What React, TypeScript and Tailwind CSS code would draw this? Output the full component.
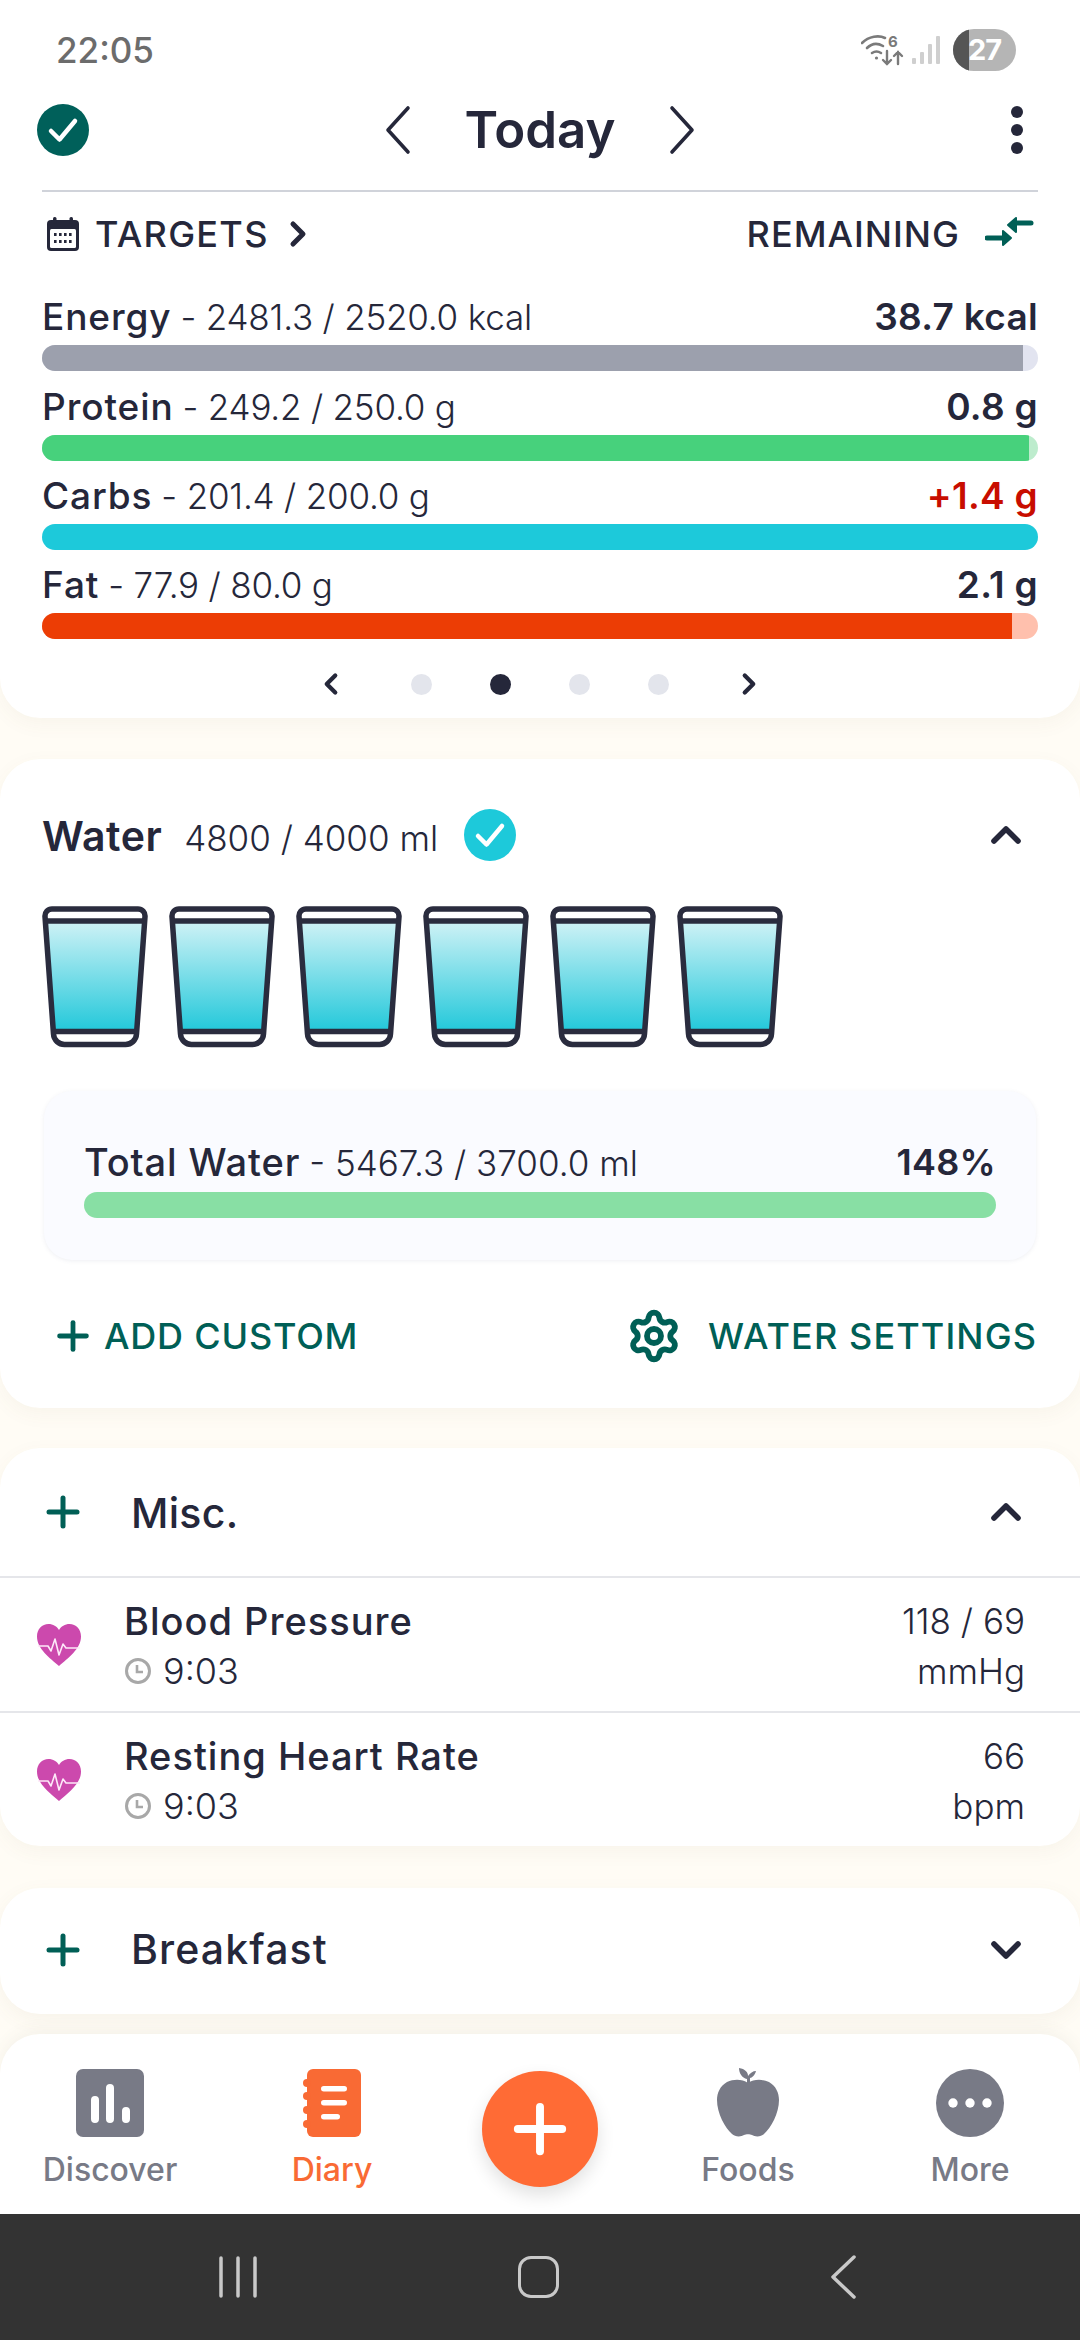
import { ChevronDown, ChevronLeft, ChevronRight, ChevronUp, Plus, Settings } from "lucide-react";

const font = { fontFamily: "Inter, 'Noto Sans', sans-serif" };

const macros = [
  { name: "Energy", detail: "2481.3 / 2520.0 kcal", left: "38.7 kcal", fill: "bg-[#9ca0ad]", rest: "bg-[#e2e4f0]", pct: 98.5, over: false },
  { name: "Protein", detail: "249.2 / 250.0 g", left: "0.8 g", fill: "bg-[#47d17c]", rest: "bg-[#bdeccd]", pct: 99.1, over: false },
  { name: "Carbs", detail: "201.4 / 200.0 g", left: "+1.4 g", fill: "bg-[#1dc9da]", rest: "bg-[#1dc9da]", pct: 100, over: true },
  { name: "Fat", detail: "77.9 / 80.0 g", left: "2.1 g", fill: "bg-[#ec3d05]", rest: "bg-[#ffc0ad]", pct: 97.4, over: false },
];

function CheckBadge({ color }: { color: string }) {
  return (
    <svg viewBox="0 0 52 52" className="h-[52px] w-[52px]">
      <circle cx="26" cy="26" r="26" fill={color} />
      <path d="M14 27l8.5 8.5L38 17" fill="none" stroke="#fff" strokeWidth="4.5" strokeLinecap="round" strokeLinejoin="round" />
    </svg>
  );
}

function StatusIcons() {
  return (
    <div className="flex items-center">
      <svg viewBox="0 0 44 34" className="h-[34px] w-[44px]" fill="none" stroke="#7a7a7a" strokeLinecap="round">
        <path d="M1 10C8 3 18 2 24 5" strokeWidth="2.6" />
        <path d="M6 15c5-5 11-5 16-2" strokeWidth="2.6" />
        <path d="M11 20c3-2 6-2 9 0" strokeWidth="2.6" />
        <circle cx="15.5" cy="25" r="1.6" fill="#7a7a7a" stroke="none" />
        <path d="M26 18v13M22 27l4 4 4-4M37 31V19M33 23l4-4 4 4" strokeWidth="2.4" />
        <text x="27" y="14" fontSize="15" fontWeight="700" fill="#7a7a7a" stroke="none" fontFamily="Inter">6</text>
      </svg>
      <svg viewBox="0 0 30 30" className="ml-[6px] h-[30px] w-[30px]" fill="#cfcfcf">
        <rect x="1" y="23" width="4" height="6" rx="1" />
        <rect x="9" y="17" width="4" height="12" rx="1" />
        <rect x="17" y="9" width="4" height="20" rx="1" />
        <rect x="25" y="1" width="4" height="28" rx="1" />
      </svg>
      <div className="relative ml-[12px] flex h-[42px] w-[63px] items-center justify-center overflow-hidden rounded-full bg-[#b5b5b5]">
        <div className="absolute inset-y-0 left-0 w-[16px] bg-[#555555]" />
        <span className="relative text-[29px] font-bold tracking-[-1px] text-white">27</span>
      </div>
    </div>
  );
}

function CalendarIcon() {
  return (
    <svg viewBox="0 0 32 34" className="h-[34px] w-[32px]">
      <rect x="0" y="3" width="32" height="31" rx="4" fill="#25273a" />
      <rect x="6" y="0" width="3.5" height="7" rx="1.5" fill="#25273a" />
      <rect x="22.5" y="0" width="3.5" height="7" rx="1.5" fill="#25273a" />
      <rect x="3" y="12" width="26" height="19" rx="1.5" fill="#fff" />
      {[8, 13, 18, 23].map((x) => (
        <g key={x} fill="#25273a">
          <rect x={x - 1} y="16" width="2.6" height="3" />
          <rect x={x - 1} y="23" width="2.6" height="3" />
        </g>
      ))}
    </svg>
  );
}

function CompareIcon() {
  return (
    <svg viewBox="0 0 50 36" className="h-[36px] w-[50px]" fill="#005f56" stroke="#005f56" strokeLinejoin="round">
      <path d="M30 7H46" strokeWidth="5" strokeLinecap="round" />
      <path d="M31 2V16L23 9Z" strokeWidth="2" />
      <path d="M2 22H20" strokeWidth="5" strokeLinecap="round" />
      <path d="M18 15V29L26 22Z" strokeWidth="2" />
    </svg>
  );
}

function BackArrow({ flip }: { flip?: boolean }) {
  return (
    <svg viewBox="0 0 26 50" className={`h-[50px] w-[26px] ${flip ? "-scale-x-100" : ""}`} fill="none" stroke="#25273a" strokeWidth="3.6" strokeLinecap="round" strokeLinejoin="round">
      <path d="M23 3L3 25l20 22" />
    </svg>
  );
}

function Glass() {
  return (
    <svg viewBox="0 0 106 142" className="h-[142px] w-[106px]">
      <defs>
        <linearGradient id="water" x1="0" y1="0" x2="0" y2="1">
          <stop offset="0" stopColor="#cff2f6" />
          <stop offset="1" stopColor="#22c8da" />
        </linearGradient>
      </defs>
      <path d="M5 15H101L93 125.5H13Z" fill="url(#water)" />
      <g fill="none" stroke="#2a2c3e" strokeWidth="5.5">
        <path d="M10 3H96A7 7 0 0 1 103 10.5L94.5 128A11 11 0 0 1 83 138.5H23A11 11 0 0 1 11.5 128L3 10.5A7 7 0 0 1 10 3Z" />
        <path d="M4 15H102M13 125.5H93" />
      </g>
    </svg>
  );
}

function HeartIcon() {
  return (
    <svg viewBox="0 0 44 42" className="h-[42px] w-[44px]">
      <path d="M22 42C13 34 0 25 0 12.500 0 5 5 0 11.500 0 16 0 20 2.500 22 6 24 2.500 28 0 32.500 0 39 0 44 5 44 12.500 44 25 31 34 22 42Z" fill="#cc49ad" />
      <path d="M1 22h10l3 5 4-12 4 16 4-11 3 4h14" fill="none" stroke="#fde8f8" strokeWidth="1.600" strokeLinejoin="round" />
    </svg>
  );
}

function ClockIcon() {
  return (
    <svg viewBox="0 0 28 28" className="h-[28px] w-[28px]" fill="none" stroke="#a8a8a8">
      <circle cx="14" cy="14" r="11.500" strokeWidth="3" />
      <path d="M13 8v7h6" strokeWidth="2.600" />
    </svg>
  );
}

function MiscRow({ title, value, unit }: { title: string; value: string; unit: string }) {
  return (
    <div className="flex h-[133px] items-center pl-[37px] pr-[55px]">
      <HeartIcon />
      <div className="ml-[43px] flex-1 pt-[3px]">
        <div className="text-[38px] leading-[50px] font-medium tracking-[1px]">{title}</div>
        <div className="flex items-center text-[36px] leading-[50px] font-light">
          <ClockIcon />
          <span className="ml-[11px]">9:03</span>
        </div>
      </div>
      <div className="pt-[2px] text-right text-[35px] leading-[50px] font-light">
        <div>{value}</div>
        <div>{unit}</div>
      </div>
    </div>
  );
}

function NavItem({ label, width, active, children }: { label: string; width: string; active?: boolean; children: React.ReactNode }) {
  return (
    <div className={`flex flex-col items-center ${width}`}>
      <div className="flex h-[68px] items-center justify-center">{children}</div>
      <div className={`mt-[13px] text-[32px] leading-[40px] font-medium ${active ? "text-[#f96a34]" : "text-[#787a86]"}`}>{label}</div>
    </div>
  );
}

export default function App() {
  return (
    <div style={font} className="flex h-[2340px] w-[1080px] flex-col overflow-hidden bg-[#fffcf5] text-[#25273a]">
      <div className="rounded-b-[40px] bg-white shadow-[0_6px_20px_rgba(120,100,60,0.05)]">
        <div className="flex h-[100px] items-center justify-between pl-[56px] pr-[64px]">
          <span className="text-[35px] font-medium text-[#6c6c6c]">22:05</span>
          <StatusIcons />
        </div>
        <div className="relative flex h-[60px] items-center justify-center">
          <div className="absolute left-[37px] top-[4px]">
            <CheckBadge color="#00605a" />
          </div>
          <BackArrow />
          <span className="mx-[53px] text-[51px] font-semibold">Today</span>
          <BackArrow flip />
          <div className="absolute right-[57px] top-[6px] flex h-[48px] flex-col justify-between">
            <div className="h-[12px] w-[12px] rounded-full bg-[#25273a]" />
            <div className="h-[12px] w-[12px] rounded-full bg-[#25273a]" />
            <div className="h-[12px] w-[12px] rounded-full bg-[#25273a]" />
          </div>
        </div>
        <div className="mx-[42px] mt-[30px] h-[2px] bg-[#d0d3da]" />
        <div className="flex h-[84px] items-center justify-between pl-[47px] pr-[45px]">
          <div className="flex items-center">
            <CalendarIcon />
            <span className="ml-[16px] text-[36px] font-medium tracking-[1.3px]">TARGETS</span>
            <ChevronRight size={40} strokeWidth={3} className="ml-[9px]" />
          </div>
          <div className="flex items-center">
            <span className="text-[36px] font-medium tracking-[1px]">REMAINING</span>
            <div className="ml-[25px]">
              <CompareIcon />
            </div>
          </div>
        </div>
        <div className="mt-[16px] flex flex-col gap-[10px] px-[42px]">
          {macros.map((m) => (
            <div key={m.name}>
              <div className="flex h-[50px] items-center justify-between">
                <div className="text-[37px] font-medium tracking-[0.9px]">
                  {m.name}
                  <span className="ml-[9px] text-[35px] font-light tracking-[-0.2px]">- {m.detail}</span>
                </div>
                <div className={`text-[37px] font-semibold tracking-[0.3px] ${m.over ? "text-[#c80d00]" : ""}`}>{m.left}</div>
              </div>
              <div className={`mt-[3.3px] flex h-[26px] overflow-hidden rounded-full ${m.rest}`}>
                <div className={m.fill} style={{ width: `${m.pct}%` }} />
              </div>
            </div>
          ))}
        </div>
        <div className="mt-[25px] flex h-[40px] items-center justify-center">
          <ChevronLeft size={34} strokeWidth={3} className="mr-[63px]" />
          <div className="flex gap-[58px]">
            <div className="h-[21px] w-[21px] rounded-full bg-[#e3e5ec]" />
            <div className="h-[21px] w-[21px] rounded-full bg-[#25273a]" />
            <div className="h-[21px] w-[21px] rounded-full bg-[#e3e5ec]" />
            <div className="h-[21px] w-[21px] rounded-full bg-[#e3e5ec]" />
          </div>
          <ChevronRight size={34} strokeWidth={3} className="ml-[63px]" />
        </div>
        <div className="h-[14px]" />
      </div>

      <div className="mt-[41px] rounded-[40px] bg-white pt-[48px] pb-[43px] shadow-[0_6px_20px_rgba(120,100,60,0.05)]">
        <div className="flex h-[56px] items-center pl-[42px] pr-[50px]">
          <span className="pt-[3px] text-[41px] font-semibold tracking-[0.5px]">Water</span>
          <span className="ml-[22px] pt-[6px] text-[35px] font-light">4800 / 4000 ml</span>
          <div className="ml-[26px]">
            <CheckBadge color="#1dc9da" />
          </div>
          <ChevronUp size={48} strokeWidth={2.800} className="ml-auto" />
        </div>
        <div className="mt-[43px] flex gap-[21px] pl-[42px]">
          {[0, 1, 2, 3, 4, 5].map((i) => (
            <Glass key={i} />
          ))}
        </div>
        <div className="mx-[44px] mt-[43px] flex h-[169px] flex-col rounded-[28px] bg-[#fafbff] px-[40px] pt-[46px] shadow-[0_1px_4px_rgba(90,100,140,0.1)]">
          <div className="flex h-[50px] items-center justify-between">
            <div className="text-[38px] font-medium tracking-[0.9px]">
              Total Water
              <span className="ml-[9px] text-[35px] font-light tracking-normal">- 5467.3 / 3700.0 ml</span>
            </div>
            <div className="text-[36px] font-semibold tracking-[0.3px]">148%</div>
          </div>
          <div className="mt-[5px] h-[26px] rounded-full bg-[#88dfa4]" />
        </div>
        <div className="mt-[45px] flex h-[60px] items-center justify-between pl-[50px] pr-[43px] pt-[2px] text-[#005f56]">
          <div className="flex items-center">
            <Plus size={46} strokeWidth={2.500} />
            <span className="ml-[8px] text-[36px] font-medium tracking-[0.8px]">ADD CUSTOM</span>
          </div>
          <div className="flex items-center">
            <Settings size={56} strokeWidth={2.500} />
            <span className="ml-[26px] text-[36px] font-medium tracking-[1.100px]">WATER SETTINGS</span>
          </div>
        </div>
      </div>

      <div className="mt-[40px] rounded-[40px] bg-white shadow-[0_6px_20px_rgba(120,100,60,0.05)]">
        <div className="flex h-[128px] items-center pl-[39px] pr-[50px]">
          <Plus size={48} strokeWidth={2.500} className="text-[#005f56]" />
          <span className="ml-[44px] pt-[3px] text-[41px] font-medium tracking-[0.3px]">Misc.</span>
          <ChevronUp size={48} strokeWidth={2.800} className="ml-auto" />
        </div>
        <div className="h-[2px] bg-[#e5e6ea]" />
        <MiscRow title="Blood Pressure" value="118 / 69" unit="mmHg" />
        <div className="h-[2px] bg-[#e5e6ea]" />
        <MiscRow title="Resting Heart Rate" value="66" unit="bpm" />
      </div>

      <div className="mt-[42px] flex h-[126px] items-center rounded-[40px] bg-white pb-[2px] pl-[39px] pr-[50px] shadow-[0_6px_20px_rgba(120,100,60,0.06)]">
        <Plus size={48} strokeWidth={2.500} className="text-[#005f56]" />
        <span className="ml-[44px] text-[41px] font-medium tracking-[1.100px]">Breakfast</span>
        <ChevronDown size={48} strokeWidth={2.800} className="ml-auto" />
      </div>

      <div className="mt-[20px] flex h-[181px] items-start rounded-t-[40px] bg-white pt-[35px] shadow-[0_-4px_16px_rgba(90,80,60,0.06)]">
        <NavItem label="Discover" width="w-[220px]">
          <svg viewBox="0 0 68 68" className="h-[68px] w-[68px]">
            <rect width="68" height="68" rx="7" fill="#787a86" />
            <g stroke="#fff" strokeWidth="8" strokeLinecap="round">
              <path d="M19 31v19M34 19v31M50 42v8" />
            </g>
          </svg>
        </NavItem>
        <NavItem label="Diary" width="w-[224px]" active>
          <svg viewBox="0 0 58 68" className="h-[68px] w-[58px]">
            <rect x="4" width="54" height="68" rx="6" fill="#f96a34" />
            <g fill="#f96a34">
              <circle cx="4" cy="14" r="4" />
              <circle cx="4" cy="27" r="4" />
              <circle cx="4" cy="41" r="4" />
              <circle cx="4" cy="55" r="4" />
            </g>
            <g fill="#fff">
              <rect x="18" y="17" width="26" height="5.500" rx="2.750" />
              <rect x="18" y="31" width="26" height="5.500" rx="2.750" />
              <rect x="18" y="45" width="19" height="5.500" rx="2.750" />
            </g>
          </svg>
        </NavItem>
        <div className="flex w-[192px] justify-center pt-[2px]">
          <div className="flex h-[116px] w-[116px] items-center justify-center rounded-full bg-[#ff6b35] shadow-[0_8px_18px_rgba(0,0,0,0.12)]">
            <Plus size={76} strokeWidth={2.500} className="text-white" />
          </div>
        </div>
        <NavItem label="Foods" width="w-[224px]">
          <svg viewBox="0 0 62 69" className="h-[69px] w-[62px]" fill="#787a86">
            <path d="M31 15C25 11 17 11 10 14 3 18 0 25 0 32 0 45 8 60 15 66 18 69 24 69 27 67 29 66 33 66 35 67 38 69 44 69 47 66 54 60 62 45 62 32 62 25 59 18 52 14 45 11 37 11 31 15Z" />
            <path d="M22 0C28 1 31 4 31 8 33 5 36 3 39 3 38 7 35 10 33 10L33 16 30 16 30 11C25 10 22 5 22 0Z" />
          </svg>
        </NavItem>
        <NavItem label="More" width="w-[220px]">
          <svg viewBox="0 0 68 68" className="h-[68px] w-[68px]">
            <circle cx="34" cy="34" r="34" fill="#787a86" />
            <g fill="#fff">
              <circle cx="17" cy="34" r="4.700" />
              <circle cx="34" cy="34" r="4.700" />
              <circle cx="51" cy="34" r="4.700" />
            </g>
          </svg>
        </NavItem>
      </div>

      <div className="relative flex h-[126px] shrink-0 items-center bg-[#333333]">
        <svg viewBox="0 0 38 42" className="ml-[219px] h-[42px] w-[38px]" stroke="#c9c9c9" strokeWidth="3.500" strokeLinecap="round">
          <path d="M2 2v38M19 2v38M36 2v38" />
        </svg>
        <div className="ml-[261px] h-[42px] w-[41px] rounded-[13px] border-[3.5px] border-[#c9c9c9]" />
        <svg viewBox="0 0 26 44" className="ml-[271px] h-[44px] w-[26px]" fill="none" stroke="#c9c9c9" strokeWidth="3.500" strokeLinecap="round" strokeLinejoin="round">
          <path d="M24 2L3 22l21 20" />
        </svg>
      </div>
    </div>
  );
}
